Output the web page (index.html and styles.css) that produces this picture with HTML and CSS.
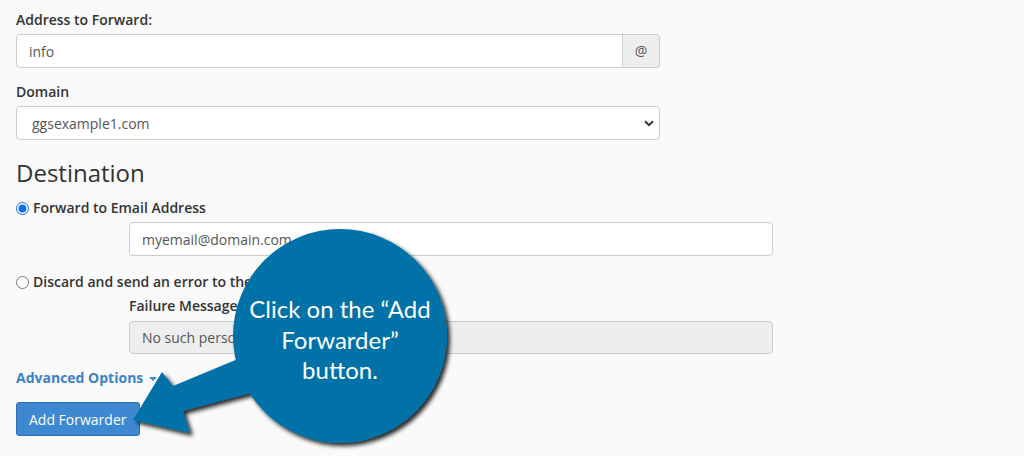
FILE: index.html
```html
<!DOCTYPE html>
<html lang="en">
<head>
  <meta charset="UTF-8" />
  <title>Add Forwarder</title>
  <link rel="stylesheet" href="styles.css">
</head>
<body>
  <div class="page">
    <form class="forwarder-form">
      <div class="group">
        <label class="label">Address to Forward:</label>
        <div class="input-group">
          <input class="field" type="text" value="info">
          <span class="addon">@</span>
        </div>
      </div>
      <div class="group">
        <label class="label">Domain</label>
        <select class="field select">
          <option>ggsexample1.com</option>
        </select>
      </div>

      <h3 class="section-title">Destination</h3>

      <label class="radio-row"><input type="radio" name="dest" checked> Forward to Email Address</label>
      <div class="sub">
        <input class="field" type="text" value="myemail@domain.com">
      </div>

      <label class="radio-row second"><input type="radio" name="dest"> Discard and send an error to the sender (at SMTP time)</label>
      <div class="sub">
        <label class="label sub-label">Failure Message (seen by sender)</label>
        <input class="field" type="text" value="No such person at this address." disabled>
      </div>

      <a class="advanced" href="#">Advanced Options <span class="caret"></span></a>

      <div class="actions">
        <button type="button" class="btn-primary">Add Forwarder</button>
      </div>
    </form>

    <!-- tutorial callout -->
    <svg class="callout-shape" width="1024" height="456" viewBox="0 0 1024 456">
      <defs>
        <filter id="shadow" x="-20%" y="-20%" width="140%" height="140%">
          <feDropShadow dx="3" dy="3" stdDeviation="2.2" flood-color="#000" flood-opacity="0.85"/>
        </filter>
      </defs>
      <g filter="url(#shadow)" fill="#0072a7">
        <polygon points="133,420 162,372 173,386 250,354 262,390 183,411 190,433"/>
        <circle cx="340" cy="336" r="107"/>
      </g>
    </svg>
    <div class="callout-text">Click on the “Add<br>Forwarder”<br>button.</div>
  </div>
</body>
</html>
```

FILE: styles.css
```css
:root {
  --bg: #fafafa;
  --text: #333;
  --muted: #555;
  --border: #ccc;
  --link: #3c82c6;
  --callout: #0072a7;
}
* { box-sizing: border-box; }
body {
  margin: 0;
  background: var(--bg);
  color: var(--text);
  font-family: 'Open Sans', sans-serif;
  font-size: 14px;
  line-height: 20px;
}
.page {
  position: relative;
  width: 1024px;
  height: 456px;
  overflow: hidden;
}
.forwarder-form { padding: 10px 0 0 16px; }
.group { width: 644px; margin-bottom: 14px; }
.label {
  display: block;
  font-weight: 600;
  margin-bottom: 4px;
}
.field {
  display: block;
  width: 100%;
  height: 34px;
  padding: 0 12px;
  border: 1px solid var(--border);
  border-radius: 4px;
  background: #fff;
  color: var(--muted);
  font-family: inherit;
  font-size: 14px;
  outline: none;
}
.field:disabled { background: #eee; color: var(--muted); height: 33px; }
.input-group { display: flex; }
.input-group .field { border-radius: 4px 0 0 4px; flex: 1; }
.addon {
  width: 37px;
  height: 34px;
  display: flex;
  align-items: center;
  justify-content: center;
  background: #eee;
  border: 1px solid var(--border);
  border-left: none;
  border-radius: 0 4px 4px 0;
  color: var(--muted);
  font-size: 14px;
}
.select {
  -webkit-appearance: none;
  appearance: none;
  padding-left: 15px;
  background: #fff url("data:image/svg+xml,%3Csvg xmlns='http://www.w3.org/2000/svg' width='10' height='7' viewBox='0 0 10 7'%3E%3Cpath d='M1 1.2l4 4 4-4' fill='none' stroke='%23333' stroke-width='2'/%3E%3C/svg%3E") no-repeat right 5px center;
}
.section-title {
  margin: 18px 0 10px;
  font-size: 24px;
  font-weight: 400;
  line-height: 30px;
}
.radio-row {
  display: flex;
  align-items: center;
  gap: 4px;
  font-weight: 600;
  white-space: nowrap;
}
.radio-row input {
  margin: 0;
  width: 13px;
  height: 13px;
  accent-color: #0b6cf5;
}
.radio-row.second { margin-top: 16px; }
.sub { margin: 4px 0 0 113px; width: 644px; }
.sub-label { margin: 4px 0 5px; }
.advanced {
  display: inline-block;
  margin-top: 14px;
  color: var(--link);
  font-weight: 700;
  text-decoration: none;
}
.caret {
  display: inline-block;
  width: 0; height: 0;
  margin-left: 2px;
  vertical-align: middle;
  border-top: 4px solid var(--link);
  border-left: 4px solid transparent;
  border-right: 4px solid transparent;
}
.actions { margin-top: 14px; }
.btn-primary {
  height: 34px;
  padding: 0 12px;
  background: #3d88d1;
  border: 1px solid #2f6fb0;
  border-radius: 3px;
  color: #fff;
  font-family: inherit;
  font-size: 14px;
}

/* callout overlay */
.callout-shape {
  position: absolute;
  left: 0;
  top: 0;
}
.callout-text {
  position: absolute;
  left: 235px;
  top: 294px;
  width: 210px;
  text-align: center;
  color: #fff;
  font-family: Lato, sans-serif;
  font-size: 24px;
  line-height: 30.5px;
}
```
